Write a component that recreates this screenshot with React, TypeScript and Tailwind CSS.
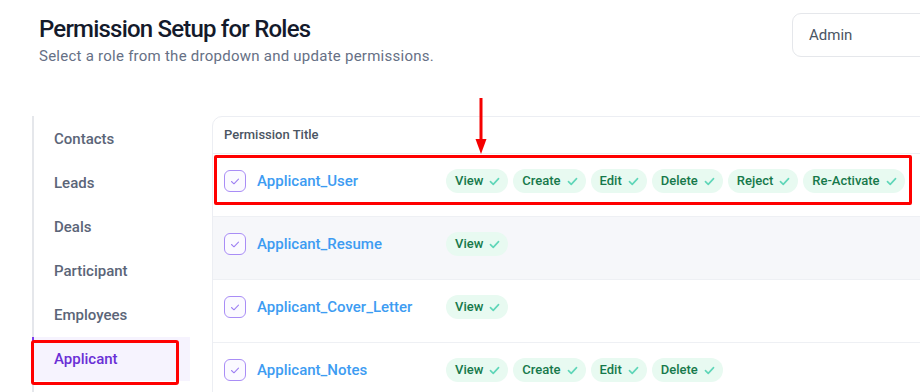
import React from "react";

const rows: { name: string; perms: string[]; gray?: boolean }[] = [
  { name: "Applicant_User", perms: ["View", "Create", "Edit", "Delete", "Reject", "Re-Activate"] },
  { name: "Applicant_Resume", perms: ["View"], gray: true },
  { name: "Applicant_Cover_Letter", perms: ["View"] },
  { name: "Applicant_Notes", perms: ["View", "Create", "Edit", "Delete"] },
];

const side = ["Contacts", "Leads", "Deals", "Participant", "Employees", "Applicant"];

const MED = "font-medium";

function Check({ className }: { className?: string }) {
  return (
    <svg viewBox="0 0 12 10" className={className} fill="none">
      <path d="M1.5 5.2 L4.6 8.2 L10.5 1.8" stroke="currentColor" strokeWidth="1.8" strokeLinecap="round" strokeLinejoin="round" />
    </svg>
  );
}

function Chip({ label }: { label: string }) {
  return (
    <div className="flex h-[24px] items-center gap-[6px] rounded-full bg-[#e8faf1] pl-[9px] pr-[8px] text-[13px] text-[#16794b]">
      <span className={MED}>{label}</span>
      <Check className="h-[9px] w-[11px] text-[#5fd6b8]" />
    </div>
  );
}

function Box() {
  return (
    <div className="flex h-[22px] w-[22px] shrink-0 items-center justify-center rounded-[6px] border-[1.5px] border-[#a98df6] bg-[#fbfaff]">
      <svg viewBox="0 0 10 8" className="h-[7px] w-[10px] text-[#9d7ff2]" fill="none">
        <path d="M1 4 L3.8 6.6 L9 1.2" stroke="currentColor" strokeWidth="1.2" strokeLinecap="round" strokeLinejoin="round" />
      </svg>
    </div>
  );
}

export default function App() {
  return (
    <div className="relative h-[392px] w-[920px] overflow-hidden bg-white font-[Roboto,sans-serif]">
      <div className="w-[1120px] pl-[32px]">
        <div className="flex h-[117px] items-start">
          <div className="w-[760px] pl-[7px] pt-[14px]">
            <h1 className={`text-[24px] leading-[30px] tracking-[-0.8px] text-[#141a2b] ${MED}`}>Permission Setup for Roles</h1>
            <p className="mt-[2px] text-[15px] leading-[20px] tracking-[0.25px] text-[#667085]">
              Select a role from the dropdown and update permissions.
            </p>
          </div>
          <div className="mt-[13px] flex h-[44px] w-[260px] items-center rounded-[9px] border border-[#e5e7eb] pl-[16px] text-[15px] text-[#4b5563]">
            Admin
          </div>
        </div>
        <div className="-mt-[1px] flex gap-[22px]">
          <div className="flex h-[300px] w-[158px] shrink-0 flex-col border-l-2 border-[#e5e7eb] pt-[1px]">
            {side.map((s) =>
              s === "Applicant" ? (
                <div
                  key={s}
                  className="-ml-[2px] flex h-[44px] items-center border-l-2 border-[#7c3aed] bg-[#f6f3fe] pl-[20px] text-[15px] text-[#6a2fd6]"
                >
                  <span className={MED}>{s}</span>
                </div>
              ) : (
                <div key={s} className="flex h-[44px] items-center pl-[20px] text-[15px] text-[#5b6578]">
                  <span className={MED}>{s}</span>
                </div>
              )
            )}
          </div>
          <div className="flex-1 rounded-t-[10px] border border-[#eceef3]">
            <div className="flex h-[37px] items-center border-b border-[#eef0f4] pl-[11px] text-[13px] text-[#4b5563]">
              <span className={MED}>Permission Title</span>
            </div>
            {rows.map((r) => (
              <div
                key={r.name}
                className={`flex h-[63px] items-start border-b border-[#eef0f4] pl-[11px] pt-[15px] ${r.gray ? "bg-[#f6f7fa]" : "bg-white"}`}
              >
                <div className="flex h-[24px] w-[222px] shrink-0 items-center gap-[11px]">
                  <Box />
                  <span className={`text-[15px] text-[#3d9cf2] ${MED}`}>{r.name}</span>
                </div>
                <div className="flex gap-[5px]">
                  {r.perms.map((p) => (
                    <Chip key={p} label={p} />
                  ))}
                </div>
              </div>
            ))}
          </div>
        </div>
      </div>

      {/* annotations */}
      <svg className="absolute left-[474px] top-[97px]" width="14" height="58" viewBox="0 0 14 58">
        <rect x="5.5" y="1" width="3" height="44" fill="#f50000" />
        <path d="M1.5 42 L12.5 42 L7 57 Z" fill="#f50000" />
      </svg>
      <div className="absolute left-[214px] top-[155px] h-[50px] w-[698px] rounded-[2px] border-[3px] border-[#ff0000]" />
      <div className="absolute left-[31px] top-[340px] h-[45px] w-[148px] rounded-[3px] border-[3px] border-[#ff0000]" />
    </div>
  );
}
